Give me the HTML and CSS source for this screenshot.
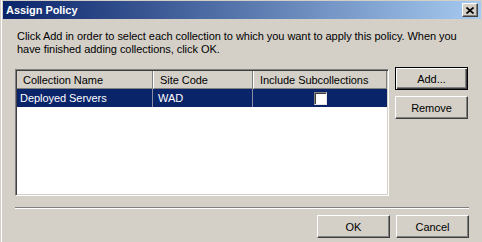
FILE: index.html
```html
<!DOCTYPE html>
<html lang="en">
<head>
    <meta charset="UTF-8">
    <title>Assign Policy</title>
    <link rel="stylesheet" href="styles.css">
</head>
<body>
    <div class="window">
        <div class="titlebar">
            <span class="title">Assign Policy</span>
            <button class="close-btn" aria-label="Close">
                <svg width="8" height="7" viewBox="0 0 8 7">
                    <path d="M0.5 0.5 L7.5 6.5 M7.5 0.5 L0.5 6.5" stroke="#000" stroke-width="1.7" fill="none"/>
                </svg>
            </button>
        </div>
        <div class="content">
            <p class="intro">Click Add in order to select each collection to which you want to apply this policy. When you have finished adding collections, click OK.</p>
            <div class="main">
                <div class="listbox">
                    <table class="list">
                        <colgroup>
                            <col class="col-name">
                            <col class="col-site">
                            <col class="col-sub">
                        </colgroup>
                        <thead>
                            <tr>
                                <th>Collection Name</th>
                                <th>Site Code</th>
                                <th>Include Subcollections</th>
                            </tr>
                        </thead>
                        <tbody>
                            <tr class="selected">
                                <td>Deployed Servers</td>
                                <td>WAD</td>
                                <td class="check"><span class="checkbox"></span></td>
                            </tr>
                        </tbody>
                    </table>
                </div>
                <div class="side-buttons">
                    <button class="btn default">Add...</button>
                    <button class="btn">Remove</button>
                </div>
            </div>
            <div class="separator"></div>
            <div class="footer">
                <button class="btn">OK</button>
                <button class="btn">Cancel</button>
            </div>
        </div>
    </div>
</body>
</html>
```

FILE: styles.css
```css
body {
    margin: 0;
    background-color: #d4d0c8;
    font-family: 'Liberation Sans', Arial, sans-serif;
    font-size: 11px;
    letter-spacing: -0.05px;
    color: #000;
}
.window {
    width: 481px;
    height: 242px;
    box-sizing: border-box;
    margin-left: 1px;
    padding: 1px 1px 0 1px;
    border-left: 1px solid #fff;
    background-color: #d4d0c8;
}
/* Title bar */
.titlebar {
    height: 18px;
    display: flex;
    align-items: center;
    justify-content: space-between;
    padding: 0 3px 0 3px;
    background: linear-gradient(to right, #0a246a, #a6caf0);
}
.title {
    color: #fff;
    font-weight: bold;
    font-size: 11px;
    line-height: 18px;
}
.close-btn {
    width: 16px;
    height: 14px;
    padding: 0;
    display: flex;
    align-items: center;
    justify-content: center;
    background-color: #d4d0c8;
    border: 1px solid;
    border-color: #fff #404040 #404040 #fff;
    box-shadow: inset -1px -1px #808080;
}
.close-btn svg {
    display: block;
}
/* Dialog body */
.content {
    padding: 0 12px;
}
.intro {
    margin: 11px 0 0;
    padding-left: 2px;
    line-height: 13px;
}
.main {
    display: flex;
    align-items: flex-start;
    gap: 6px;
    margin-top: 11px;
}
.listbox {
    width: 374px;
    height: 127px;
    margin-top: 2px;
    box-sizing: border-box;
    background-color: #fff;
    border: 1px solid;
    border-color: #808080 #fff #fff #808080;
    box-shadow: inset 1px 1px #404040, inset -1px -1px #d4d0c8;
    padding: 1px;
}
.list {
    width: 370px;
    table-layout: fixed;
    border-collapse: separate;
    border-spacing: 0;
}
.col-name { width: 136px; }
.col-site { width: 100px; }
.col-sub { width: 134px; }
.list th {
    height: 18px;
    box-sizing: border-box;
    padding: 0 0 0 6px;
    background-color: #d4d0c8;
    font-weight: normal;
    text-align: left;
    white-space: nowrap;
    border-right: 1px solid #808080;
    border-bottom: 1px solid #808080;
}
.list th + th {
    border-left: 1px solid #fff;
}
.list td {
    height: 18px;
    padding: 0 0 0 5px;
    white-space: nowrap;
}
.list td:first-child {
    padding-left: 3px;
}
.selected td {
    background-color: #0a246a;
    color: #fff;
    border-right: 1px solid #8a8ea4;
}
.list td.check {
    padding: 0;
    text-align: center;
    border-right: none;
}
.checkbox {
    display: inline-block;
    width: 13px;
    height: 13px;
    box-sizing: border-box;
    vertical-align: middle;
    background-color: #fff;
    border: 1px solid;
    border-color: #808080 #e6e6e6 #e6e6e6 #808080;
    box-shadow: inset 1px 1px #404040;
}
.side-buttons {
    display: flex;
    flex-direction: column;
    gap: 6px;
}
/* Buttons */
.btn {
    width: 73px;
    height: 23px;
    padding: 0;
    font-family: inherit;
    font-size: 11px;
    letter-spacing: inherit;
    color: #000;
    background-color: #d4d0c8;
    border: 1px solid;
    border-color: #fff #404040 #404040 #fff;
    box-shadow: inset -1px -1px #808080;
}
.btn.default {
    border-color: #000;
    box-shadow: inset 1px 1px #fff, inset -1px -1px #404040, inset -2px -2px #808080;
}
.separator {
    margin-top: 11px;
    border-top: 1px solid #808080;
    border-bottom: 1px solid #fff;
}
.footer {
    display: flex;
    justify-content: flex-end;
    gap: 6px;
    margin-top: 6px;
}
```
